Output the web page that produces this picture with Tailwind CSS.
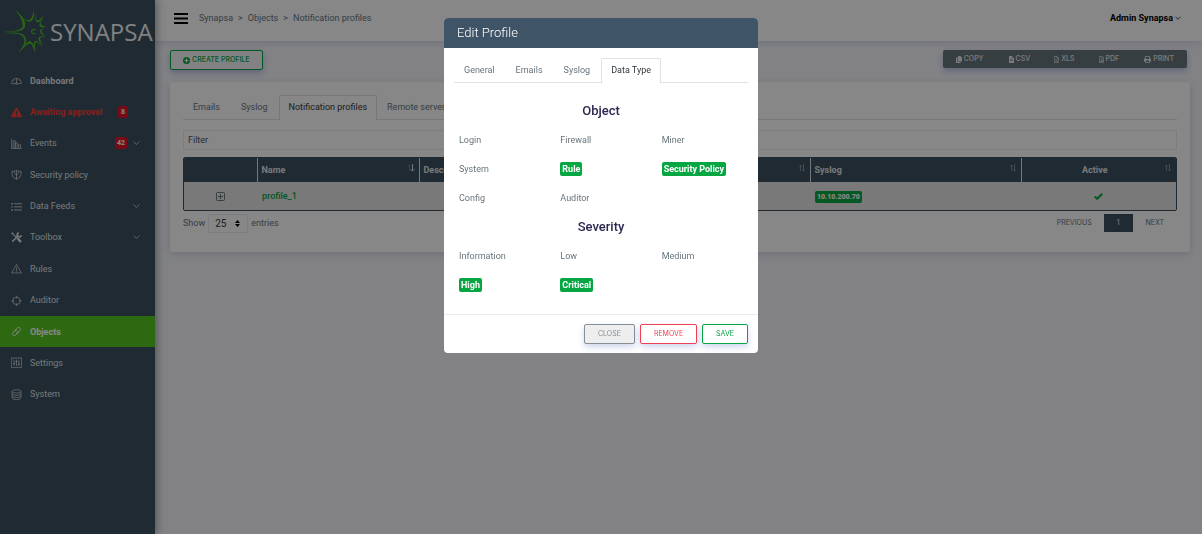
<!DOCTYPE html>
<html lang="en">
<head>
    <meta charset="UTF-8" />
    <meta name="viewport" content="width=device-width, initial-scale=1.0" />
    <title>Synapsa - Notification profiles</title>
    <script src="https://cdn.jsdelivr.net/npm/@tailwindcss/browser@4"></script>
</head>
<body class="bg-[#f5f6fc] font-['Roboto',sans-serif] text-[9px] leading-3 text-[#67757c]">

    <div class="flex min-h-screen">

        <!-- Sidebar -->
        <aside class="relative z-10 w-[155px] shrink-0 bg-[#3c5060] text-[#dfe3e6] shadow-[2px_0_8px_rgba(0,0,0,0.35)]">
            <a href="#" class="flex h-[63px] items-center gap-1 pl-1 text-[#f2f4f5]">
                <svg class="h-[46px] w-[42px] shrink-0" viewBox="0 0 42 46" fill="#4fc222">
                    <path d="M0 22.500Q14 22.500 18 19Q19.500 17 18 12Q16 6 10 0Q18 6 20.500 12Q22 16 20 19.500Q16 23.500 0 22.500z" />
                    <path d="M14 3Q19 10 24 11.500Q28 11 30 1Q30.500 9 27.500 12Q24.500 14 21 11Q17 8 14 3z" />
                    <path d="M31.500 2Q31 9 33 11.500Q35 12 40 6Q36.500 13.500 33.500 13.500Q30 12 31.500 2z" />
                    <path d="M40.500 8Q36 13 37 15.500Q38.500 17.500 42 17Q38 19.500 35.500 17Q35 13.500 40.500 8z" />
                    <path d="M42 18.500Q38 19.500 37.500 22Q38 25 42 27.500Q36 25.500 36 22Q36.500 19 42 18.500z" />
                    <path d="M41.500 28.500Q37 27.500 36 29.500Q36 32 39.500 37Q34 32 34.500 29Q36 26.500 41.500 28.500z" />
                    <path d="M38.500 38Q34 33 32 33Q30 35 32 44Q28.500 36 30.500 32.500Q33.500 30.500 38.500 38z" />
                    <path d="M30.500 44Q29 36 26.500 34.500Q23 34 17 42Q22 32.500 26 32Q30.500 34 30.500 44z" />
                    <path d="M14 44Q20 37 20.500 32Q20 27 16 25.500Q10 24 0 24Q12 22.500 18.500 25Q22.500 28 22 33Q20.500 39 14 44z" />
                    <path fill="none" stroke="#4fc222" stroke-width="1.200" d="M31.500 20.500Q28 20 27.500 22.500Q28 25.500 31.500 24.500" />
                </svg>
                <span class="font-['Open_Sans',sans-serif] text-2xl leading-6">SYNAPSA</span>
            </a>
            <nav class="mt-[2px] grid h-[345px] auto-rows-fr">
                <a href="#" class="flex items-center px-[11px] font-bold">
                    <svg class="mr-2 size-[11px]" viewBox="0 0 16 16" fill="none" stroke="currentColor"><path d="M1 12a7 7 0 1 1 14 0M1 12.500h5.500M9.500 12.500H15M8 5v7M3.500 7.500l1 .6M12.500 7.500l-1 .6" /><circle cx="8" cy="12.500" r="1.300" /></svg>
                    Dashboard
                </a>
                <a href="#" class="flex items-center px-[11px] font-bold text-[#ff3d33]">
                    <svg class="mr-2 size-[11px]" viewBox="0 0 16 16"><path fill="currentColor" d="M8 1q.8 0 1.200.7l6.500 11.500q.6 1.600-1 1.800H1.300q-1.600-.2-1-1.800L6.800 1.700Q7.200 1 8 1z" /><path stroke="#3c5060" stroke-width="2" d="M8 5.500v4.500M8 11.300v2" /></svg>
                    Awaiting approval
                    <span class="mr-4 ml-auto rounded-xs bg-[#e0142d] px-[3px] text-[7px] text-white">8</span>
                </a>
                <a href="#" class="flex items-center px-[11px]">
                    <svg class="mr-2 size-[11px]" viewBox="0 0 16 16" fill="none" stroke="currentColor"><path d="M.5 1v14.500H16M3 15v-11h3v11M6 15V7h3v8M11 15v-5h3v5" /></svg>
                    Events
                    <span class="mr-[2px] ml-auto rounded-xs bg-[#e0142d] px-[2px] text-[7px] font-bold text-white">42</span>
                    <svg class="mx-1 h-1 w-[7px]" viewBox="0 0 7 4" fill="none" stroke="currentColor" stroke-width=".7"><path d="M.5.5l3 3 3-3" /></svg>
                </a>
                <a href="#" class="flex items-center px-[11px]">
                    <svg class="mr-2 size-[11px]" viewBox="0 0 16 16" fill="none" stroke="currentColor"><path d="M1.500 3l2 .8L5.500 2v4M1.500 3v5q0 4 6.500 7 6.500-3 6.500-7V3l-2 .8L10.500 2v4M8 1v14M5.500 6.500L8 9l2.500-2.500" /></svg>
                    Security policy
                </a>
                <a href="#" class="flex items-center px-[11px]">
                    <svg class="mr-2 size-[11px]" viewBox="0 0 16 16" fill="none" stroke="currentColor"><path d="M4.500 4H16M4.500 8.500H16M4.500 13H16" stroke-width="1.200" /><path d="M.5 4H2.500M.5 8.500H2.500M.5 13H2.500" stroke-width="2" /></svg>
                    Data Feeds
                    <svg class="mr-1 ml-auto h-1 w-[7px]" viewBox="0 0 7 4" fill="none" stroke="currentColor" stroke-width=".7"><path d="M.5.5l3 3 3-3" /></svg>
                </a>
                <a href="#" class="flex items-center px-[11px]">
                    <svg class="mr-2 size-[11px]" viewBox="0 0 16 16" fill="none" stroke="currentColor"><path stroke-width="1.500" d="M1.500 1.500l6 6" /><path stroke-width="3.600" stroke-linecap="round" d="M10.500 10.500l3 3" /><path stroke-width="2.400" stroke-linecap="round" d="M2.500 13.500l8-8" /><path stroke-width="2.200" d="M14.700 4.500a3 3 0 1 1-3.200-3.200" /><path stroke-width="2" d="M1 3l2-2" /></svg>
                    Toolbox
                    <svg class="mr-1 ml-auto h-1 w-[7px]" viewBox="0 0 7 4" fill="none" stroke="currentColor" stroke-width=".7"><path d="M.5.5l3 3 3-3" /></svg>
                </a>
                <a href="#" class="flex items-center px-[11px]">
                    <svg class="mr-2 size-[11px]" viewBox="0 0 16 16" fill="none" stroke="currentColor"><path d="M8 2l7 12.500H1zM8 6v5M8 12v1.200" /></svg>
                    Rules
                </a>
                <a href="#" class="flex items-center px-[11px]">
                    <svg class="mr-2 size-[11px]" viewBox="0 0 16 16" fill="none" stroke="currentColor"><circle cx="8" cy="8.500" r="5.500" /><path d="M8 1v4M8 12v4M.5 8.500h4M11.500 8.500h4" /></svg>
                    Auditor
                </a>
                <a href="#" class="flex items-center bg-[#55c721] px-[11px] font-bold text-white">
                    <svg class="mr-2 size-[11px]" viewBox="0 0 16 16" fill="none" stroke="currentColor" stroke-width="1.200"><path d="M6 8l2.500-4.500q2-2.500 4-1.300 2 1.300.8 3.800L11 9.500q-1.500 2-3.500 1" /><path d="M10 7.500L7.500 12.500q-2 2.500-4 1.300-2-1.300-.8-3.800L5 6.500q1.500-2 3.500-1" /></svg>
                    Objects
                </a>
                <a href="#" class="flex items-center px-[11px]">
                    <svg class="mr-2 size-[11px]" viewBox="0 0 16 16" fill="none" stroke="currentColor"><path d="M.5 1.500h15v14H.5zM4.500 4v9M8 4v9M11.500 4v9M3 9.500h3M6.500 6.500h3M10 10.500h3" /></svg>
                    Settings
                </a>
                <a href="#" class="flex items-center px-[11px]">
                    <svg class="mr-2 size-[11px]" viewBox="0 0 16 16" fill="none" stroke="currentColor"><ellipse cx="8" cy="3.500" rx="6.500" ry="2.500" /><path d="M1.500 3.500v9.500q1 2.500 6.500 2.500t6.500-2.500V3.500M1.500 7q1 2.200 6.500 2.200T14.500 7M1.500 10q1 2.300 6.500 2.300t6.500-2.300" /></svg>
                    System
                </a>
            </nav>
        </aside>

        <div class="min-w-0 flex-1">
            <!-- Top bar -->
            <header class="flex h-[41px] items-center bg-white pr-[21px] pb-[5px] pl-[19px] shadow-[0_1px_8px_rgba(60,60,110,0.2)]">
                <button type="button" aria-label="Toggle menu" class="mr-[11px]">
                    <svg class="h-[11px] w-[14px]" viewBox="0 0 14 11" stroke="#000" stroke-width="2"><path d="M0 1h14M0 5.500h14M0 10h14" /></svg>
                </button>
                <ol class="flex gap-[5px]">
                    <li><a href="#">Synapsa</a></li>
                    <li>&gt;</li>
                    <li><a href="#">Objects</a></li>
                    <li>&gt;</li>
                    <li>Notification profiles</li>
                </ol>
                <button type="button" class="ml-auto flex items-center gap-[2px] font-bold text-black">
                    Admin Synapsa
                    <svg class="h-1 w-[6px]" viewBox="0 0 7 4" fill="none" stroke="currentColor" stroke-width=".8"><path d="M.5.5l3 3 3-3" /></svg>
                </button>
            </header>

            <main class="pt-[9px] pr-3 pl-[15px]">
                <div class="flex items-start justify-between pr-[3px]">
                    <button type="button" class="flex h-5 items-center gap-[2px] rounded-xs border border-[#06a742] px-3 font-['Inter',sans-serif] text-[7px] font-medium text-[#06a742] shadow-[0_3px_6px_rgba(70,90,190,0.35)]">
                        <svg class="size-[7px]" viewBox="0 0 16 16"><circle cx="8" cy="8" r="8" fill="#06a742" /><path stroke="#fff" stroke-width="2.500" d="M8 3.500v9M3.500 8h9" /></svg>
                        CREATE PROFILE
                    </button>
                    <div class="flex h-[18px] items-center rounded-xs bg-[#66757b] font-['Inter',sans-serif] text-[7px] font-medium text-[#e6e9ea] shadow-[0_3px_6px_rgba(70,90,190,0.35)]">
                        <button type="button" class="flex items-center gap-[2px] px-[13px]">
                            <svg class="h-[7px] w-[6px]" viewBox="0 0 12 14" fill="currentColor"><path d="M4 0h5l3 3v8H4zM0 3h3v9h6v2H0z" /></svg>
                            COPY
                        </button>
                        <button type="button" class="flex items-center gap-[2px] px-3">
                            <svg class="h-[7px] w-[5px]" viewBox="0 0 10 14" fill="currentColor"><path fill-rule="evenodd" d="M0 0h6v4h4v10H0zM7 0l3 3H7zM2 6v1h6V6zM2 9v1h6V9z" /></svg>
                            CSV
                        </button>
                        <button type="button" class="flex items-center gap-[2px] px-3">
                            <svg class="h-[7px] w-[5px]" viewBox="0 0 10 14" fill="none" stroke="currentColor" stroke-width="1.400"><path d="M.7.7h5.300l3.300 3.300v9.300H.7zM6 1v3.500h3M3 6.500l4 5M7 6.500l-4 5" /></svg>
                            XLS
                        </button>
                        <button type="button" class="flex items-center gap-[2px] px-3">
                            <svg class="h-[7px] w-[5px]" viewBox="0 0 10 14" fill="none" stroke="currentColor" stroke-width="1.400"><path d="M.7.7h5.300l3.300 3.300v9.300H.7zM6 1v3.500h3M3 11.500q2-2 2-5 0 3 3 3.500-3 0-5 1.500" /></svg>
                            PDF
                        </button>
                        <button type="button" class="flex items-center gap-[2px] px-[13px]">
                            <svg class="size-[7px]" viewBox="0 0 14 14" fill="currentColor"><path fill-rule="evenodd" d="M2.500 0h9v5H14v6h-2.500v3h-9v-3H0V5h2.500zM4 1.500V6h6V1.500zM4 9v3.500h6V9z" /></svg>
                            PRINT
                        </button>
                    </div>
                </div>

                <!-- Profiles card -->
                <section class="mt-3 rounded-xs bg-white p-[13px] pb-[19px] shadow-[0_2px_8px_rgba(60,60,110,0.2)]">
                    <div class="flex gap-px border-b border-[#dee2e6]">
                        <a href="#" class="px-[10px] py-[6px]">Emails</a>
                        <a href="#" class="px-[10px] py-[6px]">Syslog</a>
                        <a href="#" class="-mb-px rounded-t-xs border border-b-0 border-[#dee2e6] bg-white px-[9px] pt-[5px] pb-[6px] text-[#343a40]">Notification profiles</a>
                        <a href="#" class="px-[9px] py-[6px]">Remote servers</a>
                    </div>

                    <input type="text" aria-label="Filter" placeholder="Filter" class="mt-[10px] block h-5 w-full border border-[#e9ecef] px-1 placeholder:text-[#4f5860]" />

                    <div class="mt-[7px] overflow-hidden rounded-xs border border-[#3c5060]">
                        <table class="w-full table-fixed">
                            <thead class="bg-[#3c5060] text-left text-[#e2e5e8]">
                                <tr class="h-6">
                                    <th class="w-[73px]"></th>
                                    <th class="w-[162px] border-l border-[#dee2e6] px-1 pb-px">
                                        <span class="flex justify-between">Name
                                            <svg class="size-2" viewBox="0 0 8 8" fill="none" stroke="currentColor"><path stroke-width=".6" opacity=".5" d="M2.500 7V1M1 2.500L2.500 1" /><path d="M5.500 0v7M3.800 5.300l1.700 1.700 1.700-1.700" /></svg>
                                        </span>
                                    </th>
                                    <th class="w-[195px] border-l border-[#dee2e6] px-1 pb-px">
                                        <span class="flex justify-between">Description
                                            <svg class="size-2 opacity-50" viewBox="0 0 8 8" fill="none" stroke="currentColor" stroke-width=".8"><path d="M2.500 7V1M1 2.500L2.500 1 4 2.500M5.500 0v7M4 5.500L5.500 7 7 5.500" /></svg>
                                        </span>
                                    </th>
                                    <th class="w-[196px] border-l border-[#dee2e6] px-1 pb-px">
                                        <span class="flex justify-between">Emails
                                            <svg class="size-2 opacity-50" viewBox="0 0 8 8" fill="none" stroke="currentColor" stroke-width=".8"><path d="M2.500 7V1M1 2.500L2.500 1 4 2.500M5.500 0v7M4 5.500L5.500 7 7 5.500" /></svg>
                                        </span>
                                    </th>
                                    <th class="w-[211px] border-l border-[#dee2e6] px-1 pb-px">
                                        <span class="flex justify-between">Syslog
                                            <svg class="size-2 opacity-50" viewBox="0 0 8 8" fill="none" stroke="currentColor" stroke-width=".8"><path d="M2.500 7V1M1 2.500L2.500 1 4 2.500M5.500 0v7M4 5.500L5.500 7 7 5.500" /></svg>
                                        </span>
                                    </th>
                                    <th class="border-l border-[#dee2e6] px-1 pb-px">
                                        <span class="flex"><span class="flex-1 text-center">Active</span>
                                            <svg class="size-2 opacity-50" viewBox="0 0 8 8" fill="none" stroke="currentColor" stroke-width=".8"><path d="M2.500 7V1M1 2.500L2.500 1 4 2.500M5.500 0v7M4 5.500L5.500 7 7 5.500" /></svg>
                                        </span>
                                    </th>
                                </tr>
                            </thead>
                            <tbody class="bg-[#e4e4e4]">
                                <tr class="h-7">
                                    <td>
                                        <button type="button" aria-label="Expand row" class="mx-auto block">
                                            <svg class="size-[9px]" viewBox="0 0 9 9" fill="none" stroke="#67757c"><rect x=".5" y=".5" width="8" height="8" rx="1" /><path d="M4.500 2v5M2 4.500h5" /></svg>
                                        </button>
                                    </td>
                                    <td class="px-[5px]"><a href="#" class="font-medium text-[#06a742]">profile_1</a></td>
                                    <td></td>
                                    <td></td>
                                    <td class="px-[5px]"><span class="inline-block rounded-xs bg-[#06a742] px-[2px] text-[7px] font-black text-white">10.10.200.70</span></td>
                                    <td>
                                        <svg class="mx-auto h-[7px] w-[9px]" viewBox="0 0 9 7" fill="none" stroke="#06a742" stroke-width="2"><path d="M.7 3.500l2.500 2.300L8.300.8" /></svg>
                                    </td>
                                </tr>
                            </tbody>
                        </table>
                    </div>

                    <div class="mt-[3px] flex items-start justify-between">
                        <label class="flex items-start gap-[3px]">
                            <span class="pt-[3px]">Show</span>
                            <span class="relative">
                                <select class="h-[19px] w-10 appearance-none border border-[#e9ecef] bg-white pl-[6px] text-[10px] text-[#343a40]">
                                    <option>25</option>
                                    <option>50</option>
                                </select>
                                <svg class="pointer-events-none absolute top-[6px] right-[8px] h-[7px] w-[5px]" viewBox="0 0 5 7"><path d="M2.500 0L5 3H0zM2.500 7L5 4H0z" /></svg>
                            </span>
                            <span class="pt-[3px]">entries</span>
                        </label>
                        <div class="flex items-center font-['Inter',sans-serif] text-[7px]">
                            <a href="#" class="px-3">PREVIOUS</a>
                            <a href="#" class="bg-[#3c5060] px-[13px] py-[3px] text-[#e6e9ea]">1</a>
                            <a href="#" class="px-[13px]">NEXT</a>
                        </div>
                    </div>
                </section>
            </main>
        </div>
    </div>

    <!-- Edit profile modal -->
    <div class="fixed inset-0 z-20 flex items-start justify-center bg-black/47 pt-[18px]">
        <div role="dialog" aria-labelledby="modalTitle" class="w-[314px] overflow-hidden rounded-sm bg-white">
            <h2 id="modalTitle" class="bg-[#3f5466] px-[13px] py-[7px] text-[13px] leading-4 font-light text-white">Edit Profile</h2>
            <div class="px-[10px] pt-[10px] pb-[15px]">
                <div class="flex gap-px border-b border-[#dee2e6]">
                    <a href="#" class="px-[10px] py-[6px]">General</a>
                    <a href="#" class="px-[10px] py-[6px]">Emails</a>
                    <a href="#" class="px-[10px] py-[6px]">Syslog</a>
                    <a href="#" class="-mb-px rounded-t-xs border border-b-0 border-[#dee2e6] bg-white px-[9px] pt-[5px] pb-[6px] text-[#343a40]">Data Type</a>
                </div>
                <div class="-mx-[5px] mt-[13px] grid auto-rows-[29px] grid-cols-3 items-center">
                    <h3 class="col-span-3 text-center text-[13px] font-medium text-[#2b2850]">Object</h3>
                    <div class="px-[10px]">Login</div>
                    <div class="px-[10px]">Firewall</div>
                    <div class="px-[10px]">Miner</div>
                    <div class="px-[10px]">System</div>
                    <div class="px-[10px]"><span class="inline-block rounded-xs bg-[#06a742] px-[2px] py-px font-bold text-white">Rule</span></div>
                    <div class="px-[10px]"><span class="inline-block rounded-xs bg-[#06a742] px-[2px] py-px font-bold text-white">Security Policy</span></div>
                    <div class="px-[10px]">Config</div>
                    <div class="px-[10px]">Auditor</div>
                    <h3 class="col-span-3 text-center text-[13px] font-medium text-[#2b2850]">Severity</h3>
                    <div class="px-[10px]">Information</div>
                    <div class="px-[10px]">Low</div>
                    <div class="px-[10px]">Medium</div>
                    <div class="px-[10px]"><span class="inline-block rounded-xs bg-[#06a742] px-[2px] py-px font-bold text-white">High</span></div>
                    <div class="px-[10px]"><span class="inline-block rounded-xs bg-[#06a742] px-[2px] py-px font-bold text-white">Critical</span></div>
                </div>
            </div>
            <div class="flex justify-end gap-[5px] border-t border-[#e9ecef] px-[10px] py-[9px] font-['Inter',sans-serif] text-[7px]">
                <button type="button" class="h-5 rounded-xs border border-[#868e96] bg-[#eeeeee] px-[13px] text-[#868e96] shadow-[0_3px_6px_rgba(70,90,190,0.25)]">CLOSE</button>
                <button type="button" class="h-5 rounded-xs border border-[#ef3f55] px-[13px] text-[#ef3f55] shadow-[0_3px_6px_rgba(70,90,190,0.25)]">REMOVE</button>
                <button type="button" class="h-5 rounded-xs border border-[#06a742] px-[13px] text-[#06a742] shadow-[0_3px_6px_rgba(70,90,190,0.25)]">SAVE</button>
            </div>
        </div>
    </div>

</body>
</html>
